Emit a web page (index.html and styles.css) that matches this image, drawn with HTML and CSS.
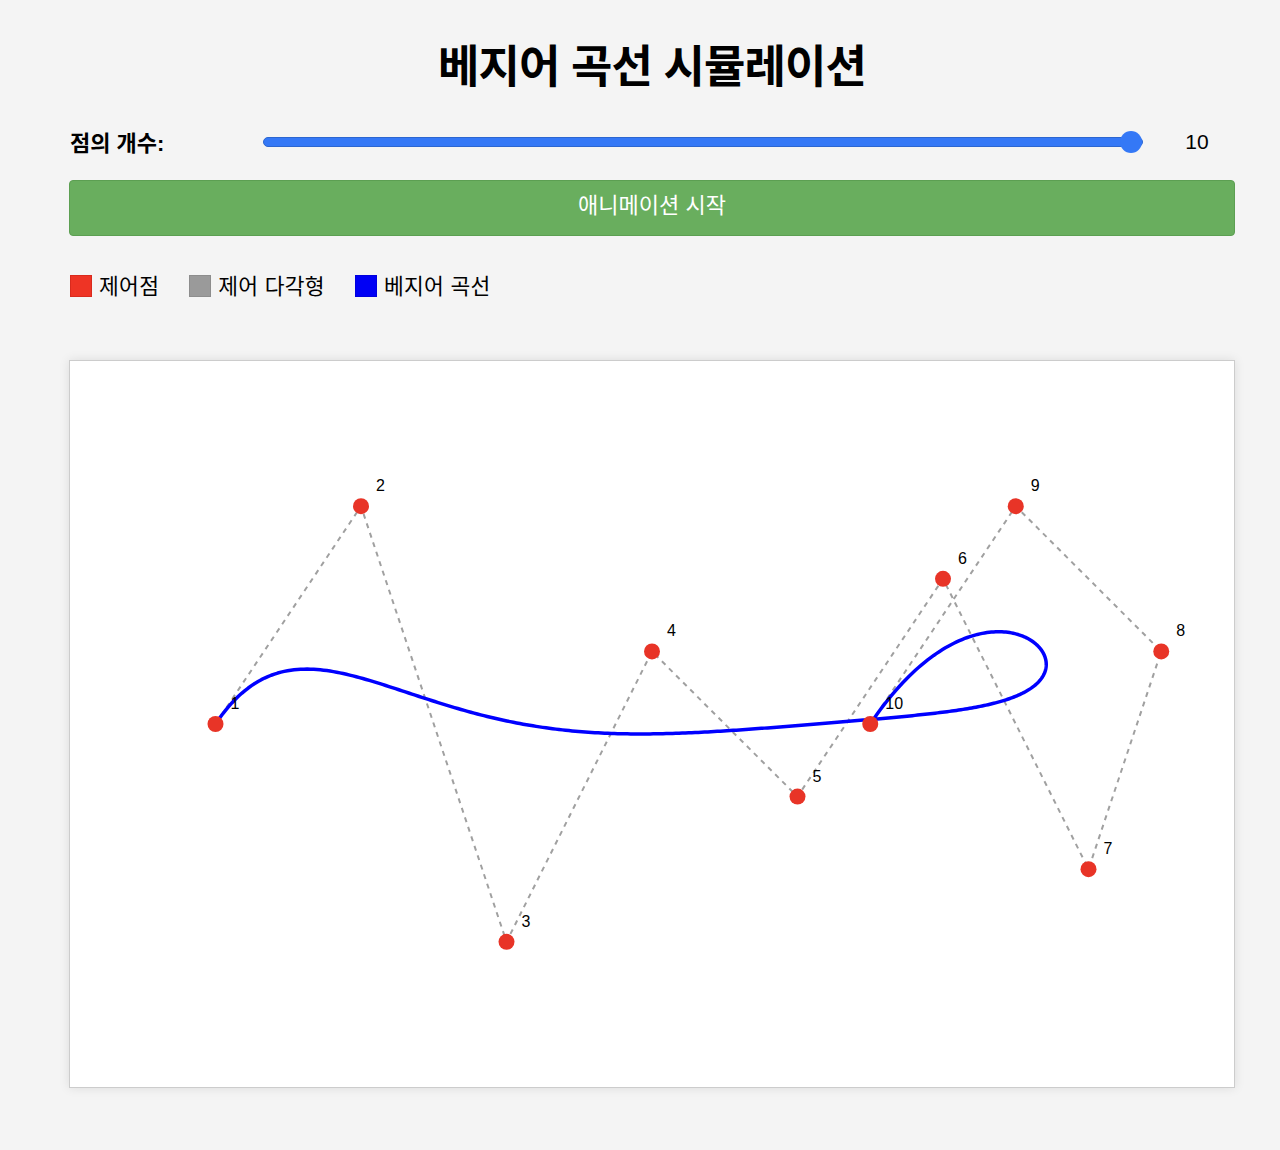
FILE: index.html
```html
<!DOCTYPE html>
<html lang="ko">
<head>
<meta charset="utf-8">
<title>베지어 곡선 시뮬레이션</title>
<link rel="stylesheet" href="styles.css">
</head>
<body>
<div class="container">
  <h1 class="title">베지어 곡선 시뮬레이션</h1>
  <div class="control-row">
    <label class="control-label" for="count">점의 개수:</label>
    <input class="slider" id="count" type="range" min="3" max="10" value="10">
    <span class="value">10</span>
  </div>
  <button class="start-btn" type="button">애니메이션 시작</button>
  <div class="legend">
    <div class="legend-item"><span class="swatch swatch-red"></span><span class="legend-text">제어점</span></div>
    <div class="legend-item"><span class="swatch swatch-gray"></span><span class="legend-text">제어 다각형</span></div>
    <div class="legend-item"><span class="swatch swatch-blue"></span><span class="legend-text">베지어 곡선</span></div>
  </div>
  <div class="canvas-box">
    <svg class="canvas" id="canvas" width="1164" height="726" viewBox="0 0 1164 726" xmlns="http://www.w3.org/2000/svg">
      <polyline id="polygon" class="polygon" points=""/>
      <polyline id="curve" class="curve" points=""/>
      <g id="points"></g>
    </svg>
  </div>
</div>
<script src="script.js"></script>
</body>
</html>
```

FILE: styles.css
```css
html, body {
  margin: 0;
  padding: 0;
  background: #f4f4f4;
}
body {
  font-family: "Liberation Sans", "Noto Sans CJK KR", Arial, sans-serif;
  color: #000;
}
.container {
  width: 1166px;
  margin-left: 69px;
  padding-top: 42px;
  padding-bottom: 40px;
}
.title {
  margin: 0;
  height: 52px;
  line-height: 52px;
  font-size: 45px;
  font-weight: 700;
  text-align: center;
  letter-spacing: -0.9px;
}
.control-row {
  display: flex;
  align-items: center;
  height: 30px;
  margin-top: 33px;
}
.control-label {
  width: 194px;
  flex: none;
  font-size: 22px;
  font-weight: 700;
  padding-left: 1px;
  box-sizing: border-box;
  position: relative;
  top: -1px;
}
.slider {
  -webkit-appearance: none;
  appearance: none;
  flex: none;
  width: 880px;
  height: 24px;
  margin: 0;
  background: transparent;
}
.slider::-webkit-slider-runnable-track {
  height: 10px;
  border-radius: 5px;
  background: #3478f6;
  border: 1px solid #2c66d0;
  box-sizing: border-box;
}
.slider::-webkit-slider-thumb {
  -webkit-appearance: none;
  appearance: none;
  width: 22px;
  height: 22px;
  border-radius: 50%;
  background: #3478f6;
  border: none;
  margin-top: -7px;
}
.value {
  width: 50px;
  margin-left: 29px;
  text-align: center;
  font-size: 21px;
}
.start-btn {
  display: block;
  width: 100%;
  height: 56px;
  margin-top: 23px;
  padding: 0 0 11px 0;
  box-sizing: border-box;
  background: #69ae5e;
  border: 1px solid #5c9f52;
  border-radius: 4px;
  color: #fff;
  font-family: "Liberation Sans", "Noto Sans CJK KR", Arial, sans-serif;
  font-size: 22px;
  cursor: pointer;
}
.legend {
  display: flex;
  align-items: center;
  height: 22px;
  margin-top: 39px;
  padding-left: 1px;
}
.legend-item {
  display: flex;
  align-items: center;
  margin-right: 30px;
}
.legend-text {
  font-size: 21.5px;
  letter-spacing: 0.3px;
  position: relative;
  top: -2px;
}
.swatch {
  display: inline-block;
  width: 20px;
  height: 20px;
  margin-right: 7px;
  border: 1px solid transparent;
}
.swatch-red {
  background: #ee3425;
  border-color: #d92a1d;
}
.swatch-gray {
  background: #9a9a9a;
  border-color: #8d8d8d;
}
.swatch-blue {
  background: #0000f5;
  border-color: #0000dd;
}
.canvas-box {
  margin-top: 63px;
  width: 1166px;
  height: 728px;
  box-sizing: border-box;
  border: 1px solid #cccccc;
  background: #fff;
  box-shadow: 0 0 10px rgba(0, 0, 0, 0.1);
}
.canvas {
  display: block;
}
.polygon {
  fill: none;
  stroke: #a0a0a0;
  stroke-width: 2;
  stroke-dasharray: 5 5;
}
.curve {
  fill: none;
  stroke: #0000ff;
  stroke-width: 3.5;
  stroke-linejoin: round;
  stroke-linecap: round;
}
.point {
  fill: #e83427;
}
.point-label {
  font-family: "Liberation Sans", Arial, sans-serif;
  font-size: 16px;
  fill: #000;
}
```

FILE: script.js
```js
(function () {
  var w = 1164, h = 726;
  var rel = [
    [1, 0.5], [2, 0.2], [3, 0.8], [4, 0.4], [5, 0.6],
    [6, 0.3], [7, 0.7], [7.5, 0.4], [6.5, 0.2], [5.5, 0.5]
  ];
  var pts = rel.map(function (p) { return [p[0] * w / 8, p[1] * h]; });
  var ns = "http://www.w3.org/2000/svg";

  document.getElementById("polygon").setAttribute("points",
    pts.map(function (p) { return p[0].toFixed(2) + "," + p[1].toFixed(2); }).join(" "));

  function bez(t) {
    var a = pts.map(function (p) { return [p[0], p[1]]; });
    for (var k = a.length - 1; k > 0; k--) {
      for (var i = 0; i < k; i++) {
        a[i][0] = (1 - t) * a[i][0] + t * a[i + 1][0];
        a[i][1] = (1 - t) * a[i][1] + t * a[i + 1][1];
      }
    }
    return a[0];
  }
  var out = [];
  for (var s = 0; s <= 400; s++) {
    var q = bez(s / 400);
    out.push(q[0].toFixed(2) + "," + q[1].toFixed(2));
  }
  document.getElementById("curve").setAttribute("points", out.join(" "));

  var g = document.getElementById("points");
  pts.forEach(function (p, i) {
    var c = document.createElementNS(ns, "circle");
    c.setAttribute("cx", p[0]);
    c.setAttribute("cy", p[1]);
    c.setAttribute("r", 8);
    c.setAttribute("class", "point");
    g.appendChild(c);
    var t = document.createElementNS(ns, "text");
    t.setAttribute("x", p[0] + 15);
    t.setAttribute("y", p[1] - 15);
    t.setAttribute("class", "point-label");
    t.textContent = String(i + 1);
    g.appendChild(t);
  });
})();
```
